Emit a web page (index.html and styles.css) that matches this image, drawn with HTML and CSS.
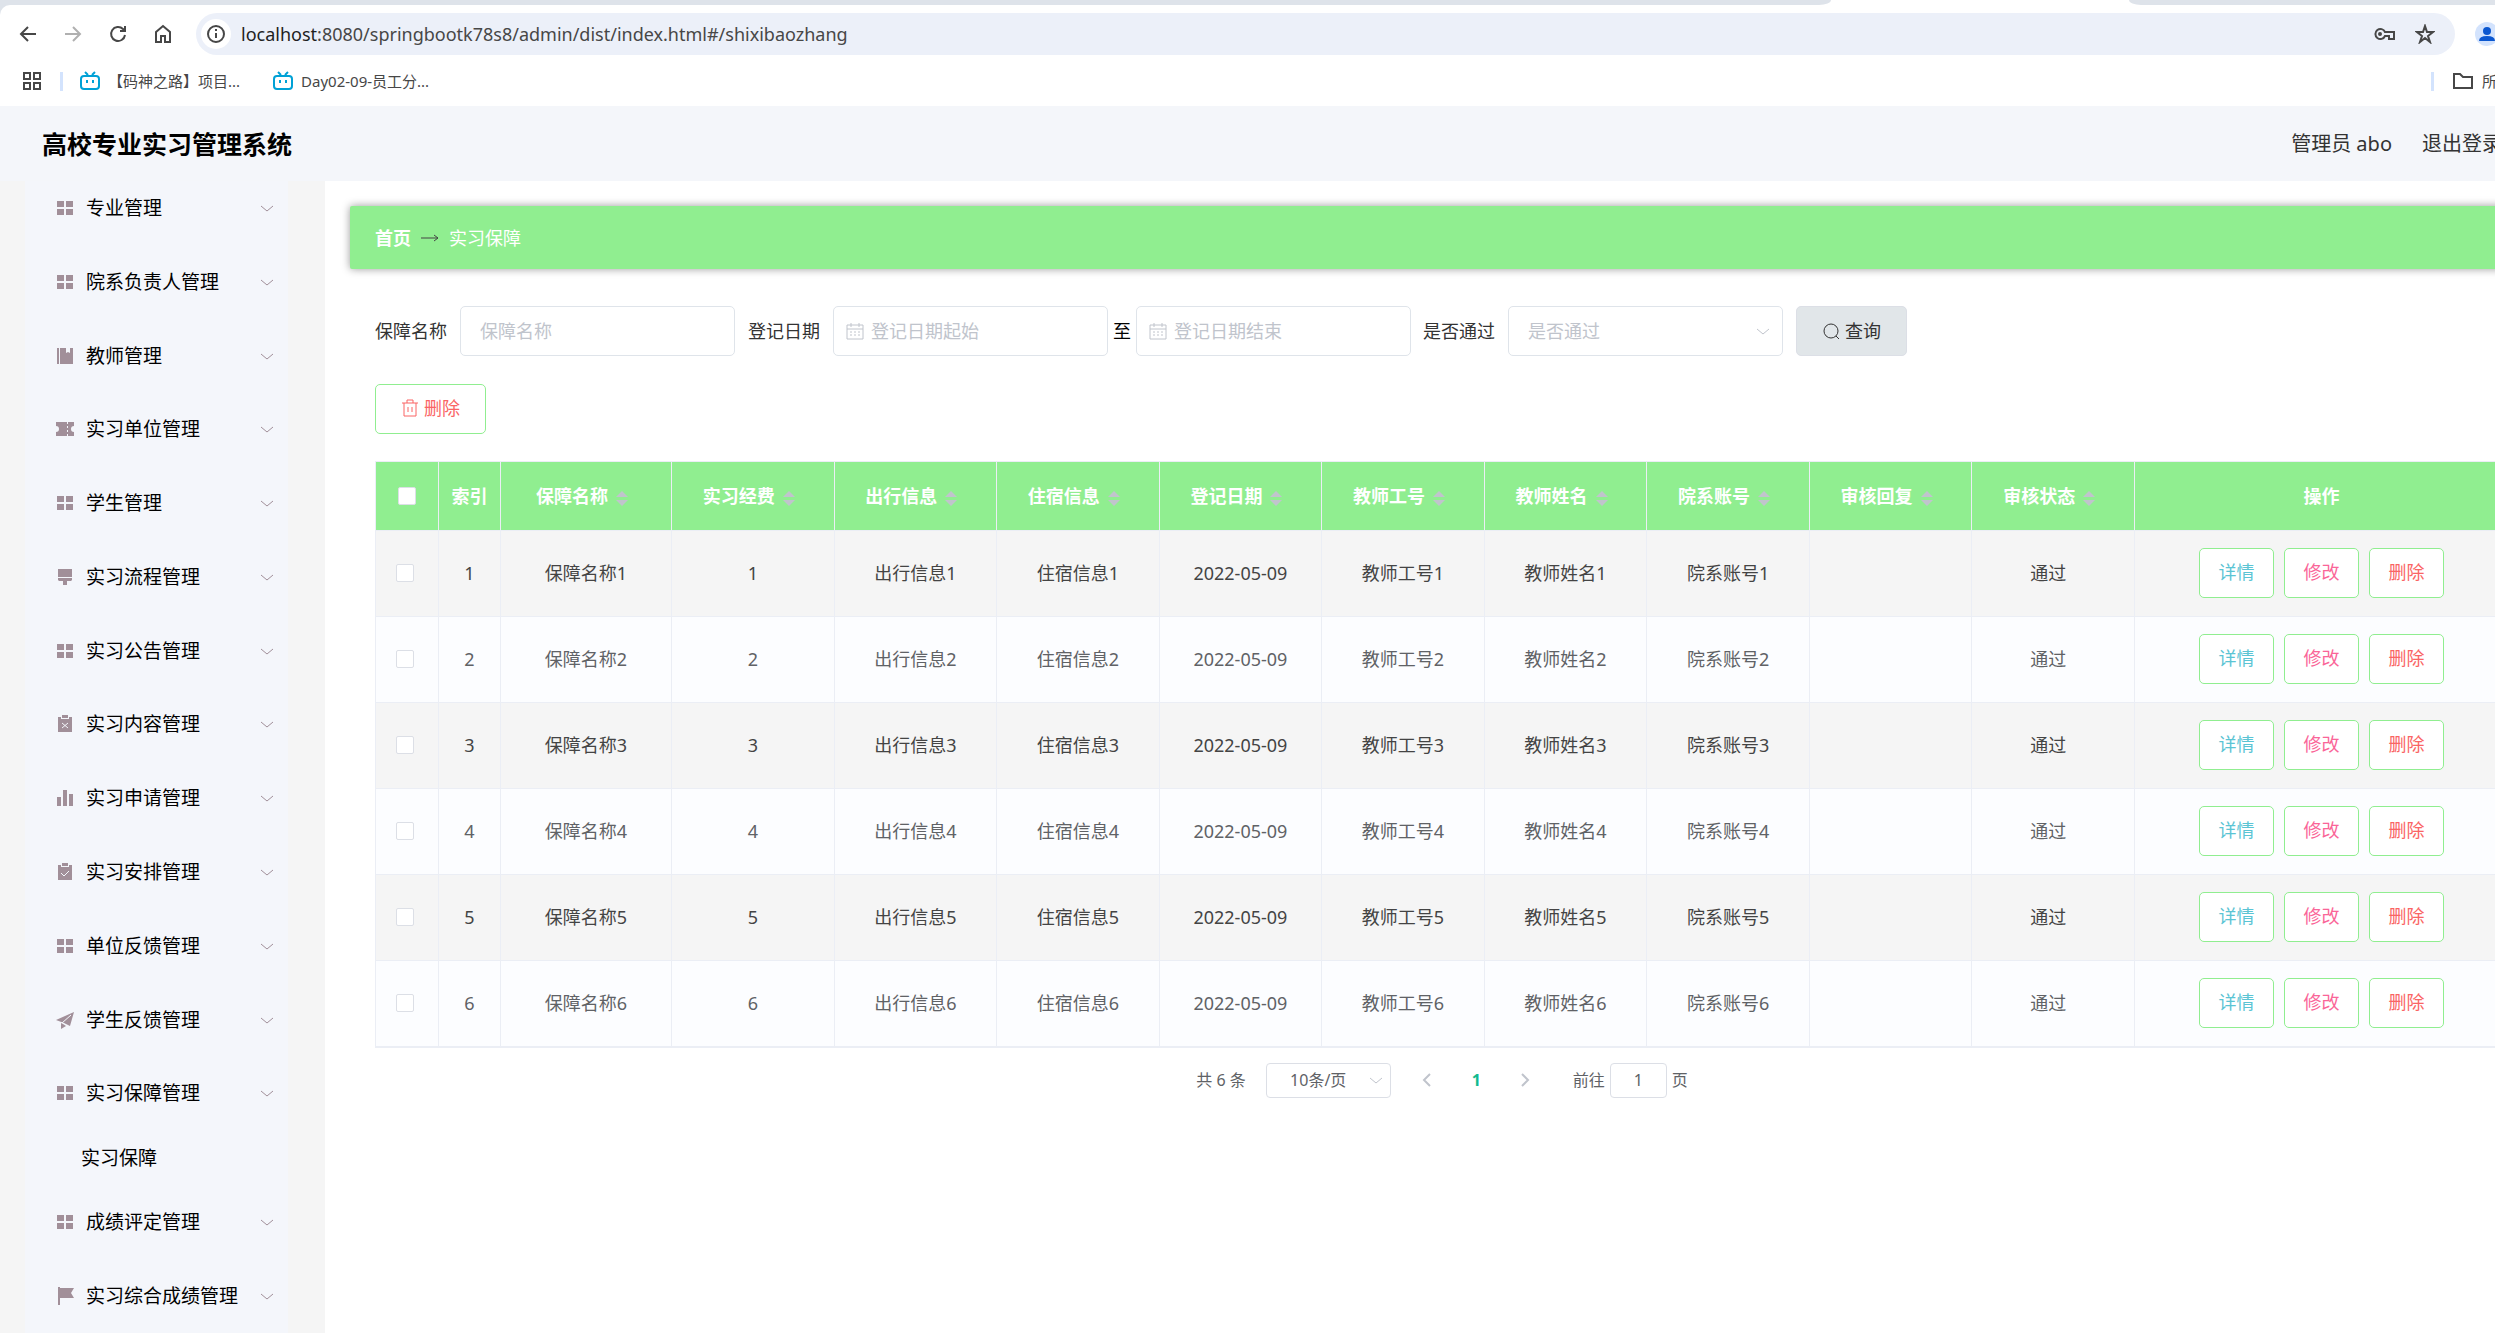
FILE: index.html
```
<!DOCTYPE html>
<html lang="zh-CN">
  <head>
    <meta charset="UTF-8" />
    <meta name="viewport" content="width=device-width, initial-scale=1.0" />
    <title>高校专业实习管理系统</title>
    <link rel="stylesheet" href="styles.css">
  </head>
  <body>
    <!-- icon sprite -->
    <svg class="sprite" aria-hidden="true">
      <symbol id="i-grid" viewBox="0 0 18 18"><path d="M1 2h7v6H1zM10 2h7v6h-7zM1 10h7v6H1zM10 10h7v6h-7z"/></symbol>
      <symbol id="i-book" viewBox="0 0 18 18"><path d="M1 1h2v16H1zM4 1h6v5l2-1 2 1V1h3v16H4z"/></symbol>
      <symbol id="i-ticket" viewBox="0 0 18 18"><path d="M0 2h11v2h1V2h6v4a3 3 0 0 0 0 6v4h-6v-2h-1v2H0v-4a3 3 0 0 0 0-6zM11 6v2h1V6zM11 10v2h1v-2z"/></symbol>
      <symbol id="i-brush" viewBox="0 0 18 18"><path d="M2 1h14v8H2zM2 10h14v2l-1 1h-4v4H7v-4H3l-1-1z"/></symbol>
      <symbol id="i-release" viewBox="0 0 18 18"><path d="M2 2h3v2h8V2h3v15H2zM6 0h6v3H6z"/><path class="cut" d="M6 8l6 5M12 8l-6 5"/></symbol>
      <symbol id="i-claim" viewBox="0 0 18 18"><path d="M2 2h3v2h8V2h3v15H2zM6 0h6v3H6z"/><path class="cut" d="M5 10l3 3 5-5"/></symbol>
      <symbol id="i-data" viewBox="0 0 18 18"><path d="M1 8h4v9H1zM7 1h4v16H7zM13 5h4v12h-4z"/></symbol>
      <symbol id="i-plane" viewBox="0 0 18 18"><path d="M0 9L18 1l-4 14-6-3zM5 12l2 1 3 2-5 3z"/><path class="cut" d="M6 12l9-8"/></symbol>
      <symbol id="i-flag" viewBox="0 0 18 18"><path d="M2 0h2v18H2zM4 1h14l-3 5 3 5H4z"/></symbol>
      <symbol id="i-down" viewBox="0 0 14 14"><path class="line" d="M1 5l6 5 6-5"/></symbol>
      <symbol id="i-left" viewBox="0 0 14 14"><path class="line" d="M10 1L4 7l6 6"/></symbol>
      <symbol id="i-right" viewBox="0 0 14 14"><path class="line" d="M4 1l6 6-6 6"/></symbol>
      <symbol id="i-date" viewBox="0 0 18 18"><path class="line" d="M1 3h16v14H1zM1 7h16M5 1v4M13 1v4M4 10h2M8 10h2M12 10h2M4 13h2M8 13h2M12 13h2"/></symbol>
      <symbol id="i-search" viewBox="0 0 18 18"><path class="line" d="M14 14l3 3"/><circle class="line" cx="9" cy="9" r="7"/></symbol>
      <symbol id="i-trash" viewBox="0 0 18 18"><path class="line" d="M1 4h16M6 4V1h6v3M3 4v13h12V4M7 8v5M11 8v5"/></symbol>
      <symbol id="i-tv" viewBox="0 0 20 20"><path class="line" d="M5 1l3 3M15 1l-3 3M4 5h12q3 0 3 3v7q0 3-3 3H4q-3 0-3-3V8q0-3 3-3zM7 9v3M13 9v3"/></symbol>
    </svg>

    <div class="window">
      <div class="tabs">
        <div class="tab-left"></div>
        <div class="tab-active"></div>
        <div class="tab-right"></div>
      </div>

      <div class="toolbar">
        <button class="nav" aria-label="后退"><svg viewBox="0 0 20 20"><path d="M18 10H3M10 3l-7 7 7 7"/></svg></button>
        <button class="nav off" aria-label="前进"><svg viewBox="0 0 20 20"><path d="M2 10h15M10 3l7 7-7 7"/></svg></button>
        <button class="nav" aria-label="刷新"><svg viewBox="0 0 20 20"><path d="M17 11a7 7 0 1 1-2-6l2 2M17 2v5h-5"/></svg></button>
        <button class="nav" aria-label="主页"><svg viewBox="0 0 20 20"><path d="M3 8l7-6 7 6v10h-5v-6H8v6H3z"/></svg></button>
        <div class="omnibox">
          <span class="info"><svg viewBox="0 0 20 20"><circle cx="10" cy="10" r="8"/><path d="M10 9v5M10 5v2"/></svg></span>
          <span class="url"><b>localhost</b>:8080/springbootk78s8/admin/dist/index.html#/shixibaozhang</span>
          <svg class="key" viewBox="0 0 24 20"><path d="M12 8a5 5 0 1 0 0 4h4v3h5V8z"/><circle class="dot" cx="7" cy="10" r="1"/></svg>
          <svg class="star" viewBox="0 0 20 20"><path d="M10 2l2 6h6l-5 4 2 6-5-4-5 4 2-6-5-4h6z"/></svg>
        </div>
        <span class="avatar"><svg viewBox="0 0 24 24"><circle cx="12" cy="9" r="4"/><path d="M4 19q0-5 8-5t8 5z"/></svg></span>
      </div>

      <div class="bookmarks">
        <svg class="apps" viewBox="0 0 18 18"><path d="M1 1h6v6H1zM11 1h6v6h-6zM1 11h6v6H1zM11 11h6v6h-6z"/></svg>
        <span class="bar"></span>
        <a href="#" class="bookmark first"><svg><use href="#i-tv"/></svg>【码神之路】项目...</a>
        <a href="#" class="bookmark"><svg><use href="#i-tv"/></svg>Day02-09-员工分...</a>
        <span class="bar push"></span>
        <a href="#" class="all"><svg viewBox="0 0 22 18"><path d="M2 2h6l3 3h9v11H2z"/></svg>所有书签</a>
      </div>

      <header class="header">
        <h1>高校专业实习管理系统</h1>
        <span class="user">管理员 abo</span>
        <a href="#" class="logout">退出登录</a>
      </header>

      <div class="body">
        <aside class="sidebar">
          <ul class="menu">
            <li><a href="#"><svg><use href="#i-grid"/></svg>专业管理<svg class="arrow"><use href="#i-down"/></svg></a></li>
            <li><a href="#"><svg><use href="#i-grid"/></svg>院系负责人管理<svg class="arrow"><use href="#i-down"/></svg></a></li>
            <li><a href="#"><svg><use href="#i-book"/></svg>教师管理<svg class="arrow"><use href="#i-down"/></svg></a></li>
            <li><a href="#"><svg><use href="#i-ticket"/></svg>实习单位管理<svg class="arrow"><use href="#i-down"/></svg></a></li>
            <li><a href="#"><svg><use href="#i-grid"/></svg>学生管理<svg class="arrow"><use href="#i-down"/></svg></a></li>
            <li><a href="#"><svg><use href="#i-brush"/></svg>实习流程管理<svg class="arrow"><use href="#i-down"/></svg></a></li>
            <li><a href="#"><svg><use href="#i-grid"/></svg>实习公告管理<svg class="arrow"><use href="#i-down"/></svg></a></li>
            <li><a href="#"><svg><use href="#i-release"/></svg>实习内容管理<svg class="arrow"><use href="#i-down"/></svg></a></li>
            <li><a href="#"><svg><use href="#i-data"/></svg>实习申请管理<svg class="arrow"><use href="#i-down"/></svg></a></li>
            <li><a href="#"><svg><use href="#i-claim"/></svg>实习安排管理<svg class="arrow"><use href="#i-down"/></svg></a></li>
            <li><a href="#"><svg><use href="#i-grid"/></svg>单位反馈管理<svg class="arrow"><use href="#i-down"/></svg></a></li>
            <li><a href="#"><svg><use href="#i-plane"/></svg>学生反馈管理<svg class="arrow"><use href="#i-down"/></svg></a></li>
            <li>
              <a href="#"><svg><use href="#i-grid"/></svg>实习保障管理<svg class="arrow"><use href="#i-down"/></svg></a>
              <a href="#" class="sub">实习保障</a>
            </li>
            <li><a href="#"><svg><use href="#i-grid"/></svg>成绩评定管理<svg class="arrow"><use href="#i-down"/></svg></a></li>
            <li><a href="#"><svg><use href="#i-flag"/></svg>实习综合成绩管理<svg class="arrow"><use href="#i-down"/></svg></a></li>
          </ul>
        </aside>

        <main class="main">
          <nav class="breadcrumb">
            <a href="#">首页</a>
            <svg viewBox="0 0 18 10"><path d="M0 5h17M13 2l4 3-4 3"/></svg>
            <span>实习保障</span>
          </nav>

          <div class="content">
            <form class="search">
              <label for="name">保障名称</label>
              <input type="text" id="name" class="field" placeholder="保障名称" />
              <label for="start">登记日期</label>
              <div class="field-box date">
                <svg><use href="#i-date"/></svg>
                <input type="text" id="start" class="field" placeholder="登记日期起始" />
              </div>
              <label for="end" class="to">至</label>
              <div class="field-box date">
                <svg><use href="#i-date"/></svg>
                <input type="text" id="end" class="field" placeholder="登记日期结束" />
              </div>
              <label for="pass">是否通过</label>
              <div class="field-box pick">
                <select id="pass" class="field">
                  <option>是否通过</option>
                </select>
                <svg><use href="#i-down"/></svg>
              </div>
              <button type="button" class="query"><svg><use href="#i-search"/></svg>查询</button>
            </form>

            <button class="btn del remove"><svg><use href="#i-trash"/></svg>删除</button>

            <table class="table">
              <colgroup>
                <col class="c-check" />
                <col class="c-index" />
                <col class="c-name" />
                <col span="9" />
                <col class="c-action" />
              </colgroup>
              <thead>
                <tr>
                  <th><input type="checkbox" aria-label="全选" /></th>
                  <th>索引</th>
                  <th>保障名称<i class="sort"></i></th>
                  <th>实习经费<i class="sort"></i></th>
                  <th>出行信息<i class="sort"></i></th>
                  <th>住宿信息<i class="sort"></i></th>
                  <th>登记日期<i class="sort"></i></th>
                  <th>教师工号<i class="sort"></i></th>
                  <th>教师姓名<i class="sort"></i></th>
                  <th>院系账号<i class="sort"></i></th>
                  <th>审核回复<i class="sort"></i></th>
                  <th>审核状态<i class="sort"></i></th>
                  <th>操作</th>
                </tr>
              </thead>
              <tbody id="rows"></tbody>
            </table>

            <div class="pages">
              <span>共 6 条</span>
              <div class="field-box size">
                <select aria-label="每页条数">
                  <option>10条/页</option>
                </select>
                <svg><use href="#i-down"/></svg>
              </div>
              <button aria-label="上一页"><svg><use href="#i-left"/></svg></button>
              <button class="current">1</button>
              <button aria-label="下一页"><svg><use href="#i-right"/></svg></button>
              <label for="goto">前往</label>
              <input type="text" id="goto" value="1" />
              <span>页</span>
            </div>
          </div>
        </main>
      </div>
    </div>

    <script>
      const rows = document.getElementById("rows");

      // Fill the table, one row for each record
      for (let i = 1; i <= 6; i++) {
        rows.innerHTML += `
          <tr>
            <td><input type="checkbox" aria-label="选择第${i}行" /></td>
            <td>${i}</td>
            <td>保障名称${i}</td>
            <td>${i}</td>
            <td>出行信息${i}</td>
            <td>住宿信息${i}</td>
            <td>2022-05-09</td>
            <td>教师工号${i}</td>
            <td>教师姓名${i}</td>
            <td>院系账号${i}</td>
            <td></td>
            <td class="state">通过</td>
            <td>
              <div class="actions">
                <button class="btn detail">详情</button>
                <button class="btn edit">修改</button>
                <button class="btn del">删除</button>
              </div>
            </td>
          </tr>`;
      }
    </script>
  </body>
</html>
```

FILE: styles.css
```
* {
  box-sizing: border-box;
}

body {
  margin: 0;
  overflow: hidden;
  font-family: "Noto Sans", "Noto Sans CJK SC", sans-serif;
  font-size: 18px;
  line-height: 24px;
  color: #333;
  background: #fff;
}

a {
  color: inherit;
  text-decoration: none;
}

button,
input,
select {
  font: inherit;
  color: inherit;
}

button {
  padding: 0;
  border: 0;
  background: none;
  cursor: pointer;
}

svg {
  flex: none;
  width: 18px;
  height: 18px;
  fill: currentColor;
}

.sprite {
  position: absolute;
  width: 0;
  height: 0;
}

.line {
  fill: none;
  stroke: currentColor;
}

.cut {
  fill: none;
  stroke: #f4f6fb;
}

/* the page is a little wider than the window */
.window {
  display: flex;
  flex-direction: column;
  width: calc(100% + 14px);
  min-height: 100vh;
  background: #dee3ea;
}

/* browser bars */
.tabs {
  display: flex;
  height: 5px;
  background: #fff;
}

.tab-left,
.tab-right {
  background: #dee3ea;
}

.tab-left {
  flex: 1831;
  border-bottom-right-radius: 12px 5px;
}

.tab-active {
  flex: 298;
}

.tab-right {
  flex: 380;
  border-bottom-left-radius: 12px 5px;
}

.toolbar {
  display: flex;
  align-items: center;
  height: 58px;
  padding: 0 10px 0 5px;
  border-top-left-radius: 10px;
  background: #fff;
}

.nav {
  display: flex;
  justify-content: center;
  width: 45px;
}

.nav svg,
.info svg,
.key,
.star {
  width: 20px;
  height: 20px;
  fill: none;
  stroke: #474747;
  stroke-width: 2;
}

.off svg {
  stroke: #b0b0b0;
}

.omnibox {
  flex: 1;
  display: flex;
  align-items: center;
  height: 42px;
  margin: 0 20px 0 11px;
  padding: 0 20px 0 5px;
  border-radius: 21px;
  background: #ecf0f9;
}

.info {
  display: flex;
  align-items: center;
  justify-content: center;
  width: 30px;
  height: 30px;
  border-radius: 50%;
  background: #fff;
}

.url {
  flex: 1;
  margin-left: 10px;
  color: #474747;
}

.url b {
  font-weight: 400;
  color: #1f1f1f;
}

.key {
  width: 24px;
  margin-right: 18px;
}

.avatar {
  display: flex;
  width: 24px;
  height: 24px;
  border-radius: 50%;
  background: #d3e3fd;
}

.avatar svg {
  width: 24px;
  height: 24px;
  fill: #0b57d0;
}

.bookmarks {
  display: flex;
  align-items: center;
  height: 43px;
  padding-left: 23px;
  padding-bottom: 7px;
  font-size: 15px;
  color: #474747;
  background: #fff;
}

.bookmarks svg {
  fill: none;
  stroke: #474747;
  stroke-width: 2;
}

.bar {
  width: 3px;
  height: 19px;
  margin-left: 19px;
  background: #d3e3fd;
}

.push {
  margin-left: auto;
}

.bookmark {
  display: flex;
  align-items: center;
  gap: 8px;
  margin-left: 33px;
}

.first {
  margin-left: 17px;
}

.bookmark svg {
  width: 20px;
  height: 20px;
  color: #00a1d6;
}

.all {
  display: flex;
  align-items: center;
  gap: 8px;
  margin: 0 -33px 0 18px;
}

.all svg {
  width: 22px;
}

/* page header */
.header {
  display: flex;
  align-items: center;
  height: 75px;
  padding: 0 7px 0 42px;
  font-size: 20px;
  background: #f4f6fa;
}

.header h1 {
  margin: 0;
  font-size: 25px;
  color: #000;
}

.user {
  margin-left: auto;
}

.logout {
  margin-left: 30px;
}

.body {
  flex: 1;
  display: flex;
}

/* sidebar */
.sidebar {
  display: flex;
  width: 325px;
  padding: 0 37px 0 25px;
  background: #f5f5f5;
}

.menu {
  flex: 1;
  display: flex;
  flex-direction: column;
  justify-content: space-between;
  margin: 0;
  padding: 0 14px 10px 31px;
  list-style: none;
  font-size: 19px;
  color: #000;
  background: #f4f6fb;
}

.menu a {
  display: flex;
  align-items: center;
  gap: 12px;
  height: 54px;
}

.menu svg {
  color: #a18f99;
}

.menu .arrow {
  width: 14px;
  height: 14px;
  margin-left: auto;
}

.menu .sub {
  height: 55px;
  padding: 20px 0 0 25px;
}

/* main */
.main {
  flex: 1;
  padding: 25px 0 0 25px;
  background: #fff;
}

.breadcrumb {
  display: flex;
  align-items: center;
  height: 63px;
  padding-left: 25px;
  border-radius: 2px;
  background: #90ee90;
  box-shadow: 0 0 8px rgba(0, 0, 0, 0.4);
  color: #fff;
}

.breadcrumb a {
  font-weight: 700;
}

.breadcrumb svg {
  height: 10px;
  margin: 0 10px;
  fill: none;
  stroke: #444;
}

.content {
  padding: 37px 0 0 25px;
}

.search {
  display: flex;
  align-items: center;
}

.search label {
  width: 85px;
}

.search .to {
  width: 28px;
  padding-left: 5px;
  color: #000;
}

.field {
  width: 275px;
  height: 50px;
  padding: 0 19px;
  border: 1px solid #dfe4ea;
  border-radius: 5px;
  background: #fff;
  color: #c0c4cc;
  appearance: none;
}

.search > .field,
.pick {
  margin-right: 13px;
}

.field::placeholder {
  color: #c0c4cc;
}

.field-box {
  display: grid;
  align-items: center;
  color: #c0c4cc;
}

/* icon and control share one cell */
.field-box > * {
  grid-area: 1 / 1;
}

.field-box svg {
  z-index: 1;
  pointer-events: none;
}

.date .field {
  padding-left: 37px;
}

.date svg {
  margin-left: 13px;
}

.to + .date {
  margin-right: 12px;
}

.pick svg,
.size svg {
  justify-self: end;
  width: 14px;
  height: 14px;
  margin-right: 13px;
}

.query {
  display: flex;
  align-items: center;
  justify-content: center;
  gap: 5px;
  width: 111px;
  height: 50px;
  border: 1px solid #dcdfe6;
  border-radius: 5px;
  background: #e1e6e9;
}

.btn {
  width: 75px;
  height: 50px;
  padding-bottom: 2px;
  border: 1px solid #90ee90;
  border-radius: 5px;
  background: #fff;
}

.remove {
  display: flex;
  align-items: center;
  justify-content: center;
  gap: 5px;
  width: 111px;
  margin: 28px 0 27px;
}

.detail {
  color: #5bc4d4;
}

.edit {
  color: #fa6598;
}

.del {
  color: #fa6464;
}

/* table */
.table {
  width: 100%;
  table-layout: fixed;
  border-collapse: collapse;
  border: 1px solid #ebeef5;
  border-bottom-width: 2px;
  text-align: center;
}

.c-check {
  width: 63px;
}

.c-index {
  width: 62px;
}

.c-name {
  width: 171px;
}

.c-action {
  width: 374px;
}

.table th,
.table td {
  padding: 0;
  border: 1px solid #ebeef5;
}

.table th {
  height: 69px;
  background: #90ee90;
  color: #fff;
}

.table td {
  height: 86px;
  padding-bottom: 1px;
  color: #606266;
}

.table tr:nth-child(odd) td {
  background: #f5f5f5;
  color: #444;
}

.table tr:nth-child(even) td {
  background: #fcfdff;
}

.table input {
  display: block;
  width: 18px;
  height: 18px;
  margin: 0 auto;
  border: 1px solid #dcdfe6;
  border-radius: 2px;
  background: #fff;
  appearance: none;
}

.table td:first-child {
  padding-right: 5px;
}

.table .state {
  padding-right: 10px;
}

.sort {
  display: inline-grid;
  gap: 3px;
  margin: 0 8px;
  vertical-align: middle;
}

.sort::before,
.sort::after {
  content: "";
  border: 6px solid transparent;
}

.sort::before {
  border-top: 0;
  border-bottom-color: #c0c4cc;
}

.sort::after {
  border-bottom: 0;
  border-top-color: #c0c4cc;
}

.actions {
  display: flex;
  justify-content: center;
  gap: 10px;
}

/* pagination */
.pages {
  display: flex;
  align-items: center;
  justify-content: center;
  margin-top: 15px;
  font-size: 16px;
  color: #606266;
}

.pages select,
.pages input {
  height: 35px;
  border: 1px solid #dcdfe6;
  border-radius: 4px;
  background: #fff;
  color: #606266;
  text-align: center;
  appearance: none;
}

.pages select {
  width: 125px;
  padding: 0 36px 0 16px;
}

.pages .size {
  margin: 0 12px 0 20px;
}

.pages .size svg {
  margin-right: 8px;
}

.pages button {
  display: flex;
  justify-content: center;
  width: 49px;
  color: #c0c4cc;
}

.pages button svg {
  width: 14px;
  height: 14px;
  stroke-width: 2;
}

.pages .current {
  font-weight: 700;
  color: #13ba90;
}

.pages label {
  margin-left: 23px;
}

.pages input {
  width: 57px;
  margin: 0 5px;
}
```
